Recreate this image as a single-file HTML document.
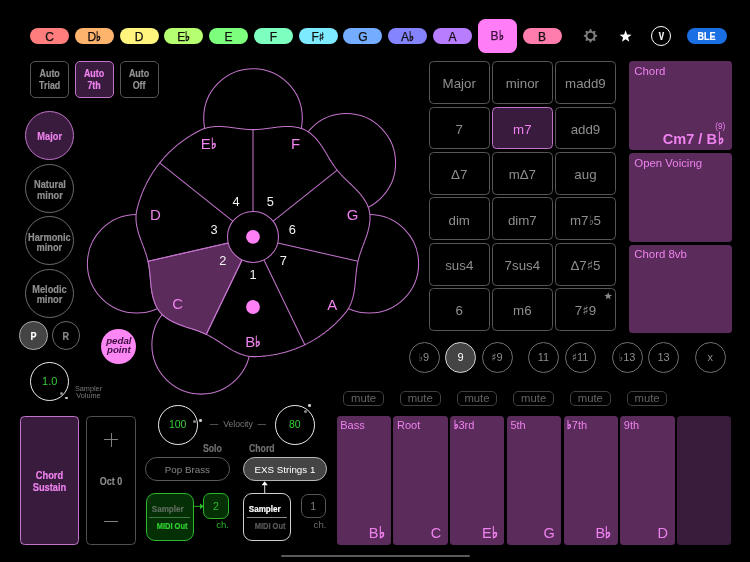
<!DOCTYPE html><html><head><meta charset="utf-8"><title>Chord Pad</title><style>
html,body{margin:0;padding:0;background:#000;}
body{width:750px;height:562px;overflow:hidden;position:relative;font-family:"Liberation Sans","DejaVu Sans",sans-serif;color:#888;}
.a{position:absolute;box-sizing:border-box;}
.c{display:flex;align-items:center;justify-content:center;text-align:center;}
.cb{display:inline-block;font-weight:bold;transform:scaleX(.86);white-space:nowrap;-webkit-text-stroke:.2px;}
.pill{height:16.8px;width:39px;top:27.6px;border-radius:8.4px;color:#141010;font-size:12px;padding-top:1.4px;-webkit-text-stroke:.25px;}
.auto{top:61.1px;width:39.2px;height:36.7px;border:1.1px solid #555;border-radius:5px;font-size:10.6px;line-height:11.8px;color:#939393;padding-top:1.4px;}
.cell{width:60.9px;height:42.8px;border:1.15px solid #565656;border-radius:4.5px;font-size:13.3px;color:#8e8e8e;padding-top:2.6px;}
.scale{left:24.9px;width:49.2px;height:49.2px;border-radius:50%;border:1.1px solid #6c6c6c;font-size:11px;line-height:10.3px;color:#909090;}
.scale .cb,.auto .cb{transform:scaleX(.84);}
.panel{left:628.5px;width:103.7px;height:88.7px;border-radius:3.5px;background:#5b2b5c;color:#ee82ee;font-size:11.4px;}
.ten{top:342px;width:31px;height:31px;border-radius:50%;border:1.15px solid #707070;font-size:11px;color:#8c8c8c;padding-bottom:.8px;}
.ten .fl,.cell .fl{-webkit-text-stroke:0;font-size:1em;}
.mute{top:391.1px;width:40.7px;height:14.7px;border:1.1px solid #404040;border-radius:5px;font-size:11.3px;color:#646464;line-height:12px;padding-bottom:.5px;}
.pad{top:415.6px;width:54.4px;height:129.2px;border-radius:3.5px;background:#5b2b5c;color:#ee82ee;}
.pad .l{position:absolute;left:3.6px;top:3.6px;font-size:11px;}
.pad .n{position:absolute;right:6.5px;bottom:4px;font-size:14.5px;}
.a.sel{border-color:#c274cb;background:#381b3d;color:#ee82ee;}
.sh{font-family:"DejaVu Sans",sans-serif;}
.fl{font-family:"DejaVu Sans",sans-serif;-webkit-text-stroke:.05em currentColor;display:inline-block;font-size:1.1em;line-height:1;vertical-align:0;transform:scaleX(.8);transform-origin:left center;margin-right:-.1em;margin-left:.02em;}
.lab .fl{font-size:1em;-webkit-text-stroke:.04em currentColor;}
.lab{position:absolute;transform:translate(-50%,-50%);white-space:nowrap;line-height:1;}
#w{position:absolute;left:0;top:0;width:750px;height:562px;will-change:transform;}
</style></head><body><div id="w"><div class="a c pill" style="left:30.0px;background:#ff7d7d;">C</div>
<div class="a c pill" style="left:74.8px;background:#ffb46e;"><span>D<span class="fl">♭</span></span></div>
<div class="a c pill" style="left:119.5px;background:#fff47e;">D</div>
<div class="a c pill" style="left:164.3px;background:#b6ff70;"><span>E<span class="fl">♭</span></span></div>
<div class="a c pill" style="left:209.1px;background:#7dff7d;">E</div>
<div class="a c pill" style="left:253.9px;background:#7dffc0;">F</div>
<div class="a c pill" style="left:298.6px;background:#7deaff;"><span>F<span class="sh">♯</span></span></div>
<div class="a c pill" style="left:343.4px;background:#74acff;">G</div>
<div class="a c pill" style="left:388.2px;background:#8484ff;"><span>A<span class="fl">♭</span></span></div>
<div class="a c pill" style="left:432.9px;background:#b87dff;">A</div>
<div class="a c" style="left:477.7px;top:19.2px;width:39px;height:33.6px;border-radius:7.5px;background:#ff7df6;color:#3a103a;font-size:12px;padding-top:0;-webkit-text-stroke:.25px;"><span>B<span class="fl">♭</span></span></div>
<div class="a c pill" style="left:522.5px;background:#ff7dac;">B</div>
<svg class="a" style="left:0;top:0" width="750" height="70" viewBox="0 0 750 70"><path d="M588.91 31.16 L589.97 29.12 L591.03 29.12 L592.09 31.16 L592.66 31.40 L594.85 30.71 L595.59 31.45 L594.90 33.64 L595.14 34.21 L597.18 35.27 L597.18 36.33 L595.14 37.39 L594.90 37.96 L595.59 40.15 L594.85 40.89 L592.66 40.20 L592.09 40.44 L591.03 42.48 L589.97 42.48 L588.91 40.44 L588.34 40.20 L586.15 40.89 L585.41 40.15 L586.10 37.96 L585.86 37.39 L583.82 36.33 L583.82 35.27 L585.86 34.21 L586.10 33.64 L585.41 31.45 L586.15 30.71 L588.34 31.40Z" fill="#7c7c7c"/><circle cx="590.5" cy="35.8" r="3.1" fill="#000"/><path d="M625.60 30.30 L627.13 34.50 L631.59 34.65 L628.07 37.40 L629.30 41.70 L625.60 39.20 L621.90 41.70 L623.13 37.40 L619.61 34.65 L624.07 34.50Z" fill="#fff"/></svg>
<div class="a c" style="left:651px;top:25.8px;width:20.4px;height:20.4px;border-radius:50%;border:1.1px solid #fff;color:#fff;font-size:10.6px;"><span class="cb" style="transform:scaleX(.76)">V</span></div>
<div class="a c" style="left:687.4px;top:27.6px;width:39.2px;height:16.4px;border-radius:8.2px;background:#1b6fe4;color:#fff;font-size:10.5px;"><span class="cb">BLE</span></div>
<div class="a c auto" style="left:30px;"><span class="cb">Auto<br>Triad</span></div>
<div class="a c auto sel" style="left:74.8px;"><span class="cb">Auto<br>7th</span></div>
<div class="a c auto" style="left:119.5px;"><span class="cb">Auto<br>Off</span></div>
<div class="a c scale sel" style="top:111.3px;"><span class="cb">Major</span></div>
<div class="a c scale" style="top:163.7px;padding-top:2.6px;"><span class="cb">Natural<br>minor</span></div>
<div class="a c scale" style="top:216.2px;padding-top:2.6px;"><span class="cb">Harmonic<br>minor</span></div>
<div class="a c scale" style="top:268.6px;padding-top:2.6px;"><span class="cb">Melodic<br>minor</span></div>
<div class="a c" style="left:19.2px;top:321.4px;width:28.4px;height:28.4px;border-radius:50%;border:1px solid #a8a8a8;background:#444;color:#fff;font-size:10.5px;"><span class="cb">P</span></div>
<div class="a c" style="left:52px;top:321.4px;width:28.4px;height:28.4px;border-radius:50%;border:1px solid #6a6a6a;color:#8a8a8a;font-size:10.5px;"><span class="cb">R</span></div>
<div class="a c" style="left:101.4px;top:329.2px;width:34.9px;height:34.9px;border-radius:50%;background:#fd86f5;color:#3a0d3c;font-size:9.7px;line-height:9px;font-weight:bold;font-style:italic;padding-bottom:2.4px;"><span>pedal<br>point</span></div>
<div class="a c" style="left:29.9px;top:361.9px;width:39.6px;height:39.6px;border-radius:50%;border:1.3px solid #ececec;color:#35cc35;font-size:11px;padding-bottom:2px;">1.0</div>
<div class="a" style="left:60px;top:391.8px;width:3px;height:3px;border-radius:50%;background:#888;"></div>
<div class="a" style="left:65px;top:396.8px;width:2.6px;height:2.6px;border-radius:50%;background:#cdcdcd;"></div>
<div class="a" style="left:72px;top:385px;width:33px;font-size:7.3px;line-height:7.2px;color:#7a7a7a;text-align:center;">Sampler<br>Volume</div>
<svg class="a" style="left:0;top:0" width="750" height="562" viewBox="0 0 750 562"><g fill="none" stroke="#c274cb" stroke-width="1.05"><circle cx="253.0" cy="118.0" r="49.3"/><circle cx="346.3" cy="162.9" r="49.3"/><circle cx="369.3" cy="263.8" r="49.3"/><circle cx="201.2" cy="344.8" r="49.3"/><circle cx="136.7" cy="263.8" r="49.3"/><path d="M253.0 129.6 L253.9 129.6 L254.9 129.6 L255.8 129.5 L256.8 129.5 L257.7 129.5 L258.7 129.4 L259.6 129.3 L260.6 129.3 L261.5 129.2 L262.5 129.1 L263.4 129.0 L264.4 128.8 L265.4 128.7 L266.3 128.6 L267.3 128.5 L268.3 128.3 L269.3 128.2 L270.3 128.1 L271.3 127.9 L272.3 127.8 L273.3 127.7 L274.3 127.5 L275.4 127.4 L276.4 127.3 L277.4 127.1 L278.5 127.0 L279.5 126.9 L280.5 126.8 L281.6 126.7 L282.6 126.7 L283.7 126.6 L284.8 126.5 L285.8 126.5 L286.9 126.5 L287.9 126.5 L289.0 126.5 L290.1 126.5 L291.1 126.6 L292.2 126.7 L293.2 126.8 L294.3 126.9 L295.3 127.0 L296.4 127.2 L297.4 127.4 L298.4 127.6 L299.4 127.9 L300.4 128.2 L301.4 128.5 L302.4 128.8 L303.4 129.2 L304.4 129.6 L305.3 130.1 L306.2 130.6 L307.1 131.1 L308.0 131.7 L308.9 132.3 L309.7 132.9 L310.5 133.5 L311.3 134.2 L312.1 134.9 L312.9 135.6 L313.7 136.3 L314.4 137.0 L315.2 137.8 L315.9 138.6 L316.6 139.4 L317.3 140.2 L317.9 141.0 L318.6 141.8 L319.3 142.7 L319.9 143.5 L320.5 144.4 L321.1 145.3 L321.7 146.1 L322.3 147.0 L322.9 147.9 L323.4 148.8 L324.0 149.6 L324.5 150.5 L325.1 151.4 L325.6 152.3 L326.1 153.2 L326.7 154.0 L327.2 154.9 L327.7 155.8 L328.2 156.7 L328.7 157.5 L329.2 158.4 L329.7 159.2 L330.2 160.1 L330.8 160.9 L331.3 161.7 L331.8 162.5 L332.3 163.3 L332.8 164.1 L333.4 164.9 L333.9 165.7 L334.5 166.5 L335.0 167.3 L335.6 168.0 L336.1 168.8 L336.7 169.5 L337.3 170.3 L337.9 171.0 L338.5 171.7 L339.1 172.4 L339.7 173.1 L340.3 173.8 L341.0 174.5 L341.6 175.2 L342.3 175.9 L342.9 176.6 L343.6 177.3 L344.3 178.0 L345.0 178.7 L345.7 179.4 L346.4 180.1 L347.1 180.7 L347.8 181.4 L348.6 182.1 L349.3 182.8 L350.0 183.5 L350.8 184.2 L351.5 184.9 L352.2 185.6 L353.0 186.4 L353.7 187.1 L354.5 187.8 L355.2 188.6 L355.9 189.3 L356.7 190.1 L357.4 190.8 L358.1 191.6 L358.8 192.4 L359.5 193.2 L360.2 194.0 L360.9 194.8 L361.5 195.6 L362.2 196.5 L362.8 197.3 L363.4 198.2 L364.0 199.1 L364.6 200.0 L365.1 200.9 L365.7 201.8 L366.2 202.7 L366.7 203.6 L367.1 204.6 L367.5 205.5 L367.9 206.5 L368.3 207.5 L368.7 208.5 L369.0 209.5 L369.2 210.5 L369.5 211.5 L369.6 212.5 L369.8 213.5 L369.9 214.6 L370.0 215.6 L370.0 216.7 L370.0 217.7 L370.0 218.8 L370.0 219.8 L369.9 220.9 L369.8 221.9 L369.7 223.0 L369.5 224.0 L369.4 225.1 L369.2 226.1 L369.0 227.2 L368.7 228.2 L368.5 229.2 L368.2 230.3 L368.0 231.3 L367.7 232.3 L367.4 233.3 L367.1 234.3 L366.8 235.3 L366.4 236.3 L366.1 237.3 L365.7 238.3 L365.4 239.3 L365.0 240.2 L364.7 241.2 L364.3 242.2 L364.0 243.1 L363.6 244.1 L363.2 245.0 L362.9 245.9 L362.5 246.9 L362.2 247.8 L361.8 248.7 L361.5 249.7 L361.2 250.6 L360.9 251.5 L360.5 252.4 L360.2 253.3 L359.9 254.2 L359.7 255.1 L359.4 256.1 L359.1 257.0 L358.9 257.9 L358.6 258.8 L358.4 259.7 L358.2 260.6 L357.9 261.5 L357.7 262.4 L357.6 263.4 L357.4 264.3 L357.2 265.2 L357.0 266.2 L356.9 267.1 L356.8 268.0 L356.6 269.0 L356.5 269.9 L356.4 270.9 L356.3 271.9 L356.2 272.8 L356.1 273.8 L356.0 274.8 L355.9 275.8 L355.8 276.8 L355.7 277.8 L355.6 278.8 L355.5 279.8 L355.4 280.8 L355.4 281.8 L355.3 282.8 L355.2 283.9 L355.0 284.9 L354.9 285.9 L354.8 287.0 L354.7 288.0 L354.5 289.0 L354.4 290.1 L354.2 291.1 L354.1 292.2 L353.9 293.2 L353.7 294.2 L353.4 295.3 L353.2 296.3 L352.9 297.3 L352.7 298.4 L352.4 299.4 L352.0 300.4 L351.7 301.4 L351.3 302.4 L351.0 303.4 L350.6 304.3 L350.1 305.3 L349.7 306.2 L349.2 307.2 L348.7 308.1 L348.1 309.0 L347.6 309.9 L347.0 310.7 L346.4 311.6 L345.7 312.4 L345.1 313.2 L344.4 314.0 L343.7 314.8 L343.0 315.6 L342.4 316.4 L341.7 317.1 L341.0 317.9 L340.3 318.7 L339.5 319.4 L338.8 320.2 L338.1 320.9 L337.4 321.7 L336.6 322.4 L335.9 323.1 L335.1 323.8 L334.4 324.6 L333.6 325.3 L332.8 326.0 L332.1 326.7 L331.3 327.3 L330.5 328.0 L329.7 328.7 L328.9 329.4 L328.1 330.0 L327.3 330.7 L326.4 331.3 L325.6 331.9 L324.8 332.6 L324.0 333.2 L323.1 333.8 L322.3 334.4 L321.4 335.0 L320.6 335.6 L319.7 336.2 L318.8 336.8 L318.0 337.4 L317.1 337.9 L316.2 338.5 L315.3 339.0 L314.4 339.6 L313.5 340.1 L312.6 340.6 L311.7 341.1 L310.8 341.6 L309.9 342.1 L309.0 342.6 L308.1 343.1 L307.2 343.6 L306.2 344.1 L305.3 344.5 L304.4 345.0 L303.4 345.4 L302.5 345.9 L301.5 346.3 L300.6 346.7 L299.6 347.1 L298.7 347.5 L297.7 347.9 L296.7 348.3 L295.8 348.7 L294.8 349.0 L293.8 349.4 L292.8 349.8 L291.8 350.1 L290.9 350.4 L289.9 350.8 L288.9 351.1 L287.9 351.4 L286.9 351.7 L285.9 352.0 L284.9 352.3 L283.9 352.5 L282.9 352.8 L281.9 353.1 L280.9 353.3 L279.8 353.5 L278.8 353.8 L277.8 354.0 L276.8 354.2 L275.8 354.4 L274.7 354.6 L273.7 354.8 L272.7 355.0 L271.7 355.1 L270.6 355.3 L269.6 355.4 L268.6 355.6 L267.5 355.7 L266.5 355.8 L265.5 355.9 L264.4 356.1 L263.4 356.1 L262.4 356.2 L261.3 356.3 L260.3 356.4 L259.2 356.4 L258.2 356.5 L257.2 356.5 L256.1 356.6 L255.1 356.6 L254.0 356.6 L253.0 356.6 L252.0 356.6 L250.9 356.5 L249.9 356.4 L248.8 356.3 L247.8 356.1 L246.8 355.9 L245.8 355.7 L244.7 355.4 L243.7 355.1 L242.7 354.8 L241.7 354.5 L240.7 354.1 L239.7 353.7 L238.8 353.3 L237.8 352.9 L236.8 352.5 L235.9 352.0 L234.9 351.6 L234.0 351.1 L233.0 350.6 L232.1 350.1 L231.2 349.6 L230.3 349.0 L229.4 348.5 L228.5 347.9 L227.6 347.4 L226.7 346.8 L225.8 346.3 L225.0 345.7 L224.1 345.1 L223.2 344.6 L222.4 344.0 L221.6 343.5 L220.7 342.9 L219.9 342.3 L219.0 341.8 L218.2 341.3 L217.4 340.7 L216.6 340.2 L215.7 339.7 L214.9 339.1 L214.1 338.6 L213.3 338.1 L212.5 337.6 L211.6 337.2 L210.8 336.7 L210.0 336.2 L209.1 335.8 L208.3 335.4 L207.5 334.9 L206.6 334.5 L205.8 334.1 L204.9 333.7 L204.1 333.3 L203.2 332.9 L202.3 332.6 L201.5 332.2 L200.6 331.9 L199.7 331.5 L198.8 331.2 L197.9 330.8 L197.0 330.5 L196.1 330.2 L195.1 329.9 L194.2 329.6 L193.3 329.3 L192.3 329.0 L191.4 328.6 L190.4 328.3 L189.5 328.0 L188.5 327.7 L187.5 327.4 L186.6 327.1 L185.6 326.8 L184.6 326.4 L183.6 326.1 L182.6 325.8 L181.6 325.4 L180.7 325.0 L179.7 324.7 L178.7 324.3 L177.7 323.9 L176.7 323.5 L175.8 323.1 L174.8 322.6 L173.8 322.2 L172.9 321.7 L172.0 321.2 L171.0 320.7 L170.1 320.2 L169.2 319.7 L168.3 319.1 L167.4 318.5 L166.5 317.9 L165.7 317.3 L164.9 316.7 L164.0 316.0 L163.2 315.3 L162.5 314.6 L161.7 313.9 L161.0 313.1 L160.3 312.4 L159.6 311.6 L159.0 310.7 L158.4 309.9 L157.9 309.0 L157.3 308.1 L156.8 307.2 L156.3 306.2 L155.9 305.3 L155.4 304.3 L155.0 303.4 L154.7 302.4 L154.3 301.4 L154.0 300.4 L153.6 299.4 L153.3 298.4 L153.1 297.3 L152.8 296.3 L152.6 295.3 L152.3 294.2 L152.1 293.2 L151.9 292.2 L151.8 291.1 L151.6 290.1 L151.5 289.0 L151.3 288.0 L151.2 287.0 L151.1 285.9 L151.0 284.9 L150.8 283.9 L150.7 282.8 L150.6 281.8 L150.6 280.8 L150.5 279.8 L150.4 278.8 L150.3 277.8 L150.2 276.8 L150.1 275.8 L150.0 274.8 L149.9 273.8 L149.8 272.8 L149.7 271.9 L149.6 270.9 L149.5 269.9 L149.4 269.0 L149.2 268.0 L149.1 267.1 L149.0 266.2 L148.8 265.2 L148.6 264.3 L148.4 263.4 L148.3 262.4 L148.1 261.5 L147.8 260.6 L147.6 259.7 L147.4 258.8 L147.1 257.9 L146.9 257.0 L146.6 256.1 L146.3 255.1 L146.1 254.2 L145.8 253.3 L145.5 252.4 L145.1 251.5 L144.8 250.6 L144.5 249.7 L144.2 248.7 L143.8 247.8 L143.5 246.9 L143.1 245.9 L142.8 245.0 L142.4 244.1 L142.0 243.1 L141.7 242.2 L141.3 241.2 L141.0 240.2 L140.6 239.3 L140.3 238.3 L139.9 237.3 L139.6 236.3 L139.2 235.3 L138.9 234.3 L138.6 233.3 L138.3 232.3 L138.0 231.3 L137.8 230.3 L137.5 229.2 L137.3 228.2 L137.0 227.2 L136.8 226.1 L136.6 225.1 L136.5 224.0 L136.3 223.0 L136.2 221.9 L136.1 220.9 L136.0 219.8 L136.0 218.8 L136.0 217.7 L136.0 216.7 L136.0 215.6 L136.1 214.6 L136.2 213.5 L136.4 212.5 L136.5 211.5 L136.8 210.5 L137.0 209.4 L137.2 208.4 L137.5 207.4 L137.8 206.4 L138.0 205.4 L138.3 204.4 L138.6 203.4 L138.9 202.4 L139.2 201.4 L139.5 200.4 L139.9 199.4 L140.2 198.5 L140.5 197.5 L140.9 196.5 L141.3 195.5 L141.6 194.5 L142.0 193.6 L142.4 192.6 L142.8 191.6 L143.2 190.7 L143.6 189.7 L144.0 188.8 L144.4 187.8 L144.9 186.9 L145.3 185.9 L145.8 185.0 L146.2 184.1 L146.7 183.1 L147.2 182.2 L147.7 181.3 L148.2 180.4 L148.7 179.5 L149.2 178.6 L149.7 177.7 L150.2 176.8 L150.7 175.9 L151.3 175.0 L151.8 174.1 L152.4 173.2 L152.9 172.3 L153.5 171.5 L154.1 170.6 L154.7 169.7 L155.3 168.9 L155.9 168.0 L156.5 167.2 L157.1 166.3 L157.7 165.5 L158.4 164.7 L159.0 163.9 L159.6 163.0 L160.3 162.2 L160.9 161.4 L161.6 160.6 L162.3 159.8 L163.0 159.0 L163.6 158.2 L164.3 157.5 L165.0 156.7 L165.7 155.9 L166.5 155.2 L167.2 154.4 L167.9 153.7 L168.6 152.9 L169.4 152.2 L170.1 151.5 L170.9 150.8 L171.6 150.0 L172.4 149.3 L173.2 148.6 L173.9 147.9 L174.7 147.3 L175.5 146.6 L176.3 145.9 L177.1 145.2 L177.9 144.6 L178.7 143.9 L179.6 143.3 L180.4 142.7 L181.2 142.0 L182.0 141.4 L182.9 140.8 L183.7 140.2 L184.6 139.6 L185.4 139.0 L186.3 138.4 L187.2 137.8 L188.0 137.2 L188.9 136.7 L189.8 136.1 L190.7 135.6 L191.6 135.0 L192.5 134.5 L193.3 134.0 L194.3 133.5 L195.2 133.0 L196.1 132.5 L197.0 132.0 L197.9 131.5 L198.8 131.0 L199.8 130.5 L200.7 130.1 L201.6 129.6 L202.6 129.2 L203.6 128.8 L204.6 128.5 L205.6 128.2 L206.6 127.9 L207.6 127.6 L208.6 127.4 L209.6 127.2 L210.7 127.0 L211.7 126.9 L212.8 126.8 L213.8 126.7 L214.9 126.6 L215.9 126.5 L217.0 126.5 L218.1 126.5 L219.1 126.5 L220.2 126.5 L221.2 126.5 L222.3 126.6 L223.4 126.7 L224.4 126.7 L225.5 126.8 L226.5 126.9 L227.5 127.0 L228.6 127.1 L229.6 127.3 L230.6 127.4 L231.7 127.5 L232.7 127.7 L233.7 127.8 L234.7 127.9 L235.7 128.1 L236.7 128.2 L237.7 128.3 L238.7 128.5 L239.7 128.6 L240.6 128.7 L241.6 128.8 L242.6 129.0 L243.5 129.1 L244.5 129.2 L245.4 129.3 L246.4 129.3 L247.3 129.4 L248.3 129.5 L249.2 129.5 L250.2 129.5 L251.1 129.6 L252.1 129.6Z" fill="#000"/><path d="M241.9 260.3 L206.3 334.3 L204.8 333.7 L203.3 333.0 L201.8 332.4 L200.3 331.8 L198.8 331.2 L197.2 330.6 L195.7 330.1 L194.1 329.5 L192.5 329.0 L190.8 328.5 L189.2 327.9 L187.5 327.4 L185.9 326.9 L184.2 326.3 L182.5 325.7 L180.8 325.1 L179.1 324.5 L177.4 323.8 L175.8 323.1 L174.1 322.3 L172.5 321.5 L170.9 320.6 L169.3 319.7 L167.8 318.8 L166.3 317.8 L164.9 316.7 L163.5 315.5 L162.1 314.3 L160.9 313.0 L159.7 311.7 L158.7 310.2 L157.7 308.7 L156.8 307.2 L156.0 305.6 L155.3 303.9 L154.6 302.3 L154.0 300.5 L153.5 298.8 L153.0 297.1 L152.6 295.3 L152.2 293.5 L151.9 291.7 L151.6 289.9 L151.3 288.1 L151.1 286.4 L150.9 284.6 L150.7 282.8 L150.6 281.1 L150.4 279.3 L150.3 277.6 L150.1 275.9 L150.0 274.2 L149.8 272.5 L149.6 270.9 L149.4 269.3 L149.2 267.6 L148.9 266.0 L148.7 264.4 L148.3 262.8 L148.0 261.3 L228.1 243.0Z" fill="#5b2b5c"/><line x1="253.0" y1="211.8" x2="253.0" y2="129.6"/><line x1="272.9" y1="221.4" x2="337.2" y2="170.2"/><line x1="277.9" y1="243.0" x2="358.0" y2="261.3"/><line x1="264.1" y1="260.3" x2="304.8" y2="344.8"/><line x1="241.9" y1="260.3" x2="206.3" y2="334.3"/><line x1="228.1" y1="243.0" x2="148.0" y2="261.3"/><line x1="233.1" y1="221.4" x2="159.7" y2="162.9"/><circle cx="253.0" cy="236.9" r="25.5" fill="#000"/></g><circle cx="253.0" cy="236.8" r="6.9" fill="#ff80f6"/><circle cx="253.0" cy="307" r="6.9" fill="#ff80f6"/></svg>
<div class="lab" style="left:253px;top:274.6px;font-size:12.8px;color:#f2f2f2;">1</div><div class="lab" style="left:222.9px;top:261.1px;font-size:12.8px;color:#f2f2f2;">2</div><div class="lab" style="left:214.1px;top:230.3px;font-size:12.8px;color:#f2f2f2;">3</div><div class="lab" style="left:236px;top:202.3px;font-size:12.8px;color:#f2f2f2;">4</div><div class="lab" style="left:270.2px;top:202.3px;font-size:12.8px;color:#f2f2f2;">5</div><div class="lab" style="left:292.2px;top:230.3px;font-size:12.8px;color:#f2f2f2;">6</div><div class="lab" style="left:283.3px;top:261.1px;font-size:12.8px;color:#f2f2f2;">7</div><div class="lab" style="left:253.1px;top:342.0px;font-size:15px;color:#ee82ee;"><span>B<span class="fl">♭</span></span></div><div class="lab" style="left:177.7px;top:303.3px;font-size:15px;color:#ee82ee;">C</div><div class="lab" style="left:155.4px;top:214.4px;font-size:15px;color:#ee82ee;">D</div><div class="lab" style="left:208.8px;top:143.60000000000002px;font-size:15px;color:#ee82ee;"><span>E<span class="fl">♭</span></span></div><div class="lab" style="left:295.7px;top:142.5px;font-size:15px;color:#ee82ee;">F</div><div class="lab" style="left:352.7px;top:214.4px;font-size:15px;color:#ee82ee;">G</div><div class="lab" style="left:332.3px;top:303.5px;font-size:15px;color:#ee82ee;">A</div>
<div class="a c cell" style="left:428.8px;top:61.2px;">Major</div>
<div class="a c cell" style="left:491.9px;top:61.2px;">minor</div>
<div class="a c cell" style="left:555.0px;top:61.2px;">madd9</div>
<div class="a c cell" style="left:428.8px;top:106.6px;">7</div>
<div class="a c cell sel" style="left:491.9px;top:106.6px;">m7</div>
<div class="a c cell" style="left:555.0px;top:106.6px;">add9</div>
<div class="a c cell" style="left:428.8px;top:152.0px;">Δ7</div>
<div class="a c cell" style="left:491.9px;top:152.0px;">mΔ7</div>
<div class="a c cell" style="left:555.0px;top:152.0px;">aug</div>
<div class="a c cell" style="left:428.8px;top:197.4px;">dim</div>
<div class="a c cell" style="left:491.9px;top:197.4px;">dim7</div>
<div class="a c cell" style="left:555.0px;top:197.4px;"><span>m7<span class="fl">♭</span>5</span></div>
<div class="a c cell" style="left:428.8px;top:242.8px;">sus4</div>
<div class="a c cell" style="left:491.9px;top:242.8px;">7sus4</div>
<div class="a c cell" style="left:555.0px;top:242.8px;"><span>Δ7<span class="sh">♯</span>5</span></div>
<div class="a c cell" style="left:428.8px;top:288.2px;">6</div>
<div class="a c cell" style="left:491.9px;top:288.2px;">m6</div>
<div class="a c cell" style="left:555.0px;top:288.2px;"><span>7<span class="sh">♯</span>9</span></div>
<svg class="a" style="left:0;top:0" width="750" height="562"><path d="M608.20 292.10 L609.17 294.87 L612.10 294.93 L609.77 296.71 L610.61 299.52 L608.20 297.85 L605.79 299.52 L606.63 296.71 L604.30 294.93 L607.23 294.87Z" fill="#8a8a8a"/></svg>
<div class="a panel" style="top:61.2px;"><span class="a" style="left:5.8px;top:4.1px;">Chord</span><span class="a" style="right:7.6px;bottom:2.9px;font-size:14.6px;font-weight:bold;white-space:nowrap;">Cm7 / B<span class="fl" style="font-size:1.15em;margin-left:.08em;font-weight:normal">♭</span></span><span class="a" style="right:7px;top:61.1px;font-size:8.2px;">(9)</span></div>
<div class="a panel" style="top:152.9px;"><span class="a" style="left:5.8px;top:3.7px;">Open Voicing</span></div>
<div class="a panel" style="top:244.6px;"><span class="a" style="left:5.8px;top:3.4px;">Chord 8vb</span></div>
<div class="a c ten" style="left:408.5px;"><span><span class="fl">♭</span>9</span></div>
<div class="a c ten" style="left:445.0px;background:#444;border:1.3px solid #d4d4d4;color:#fff;">9</div>
<div class="a c ten" style="left:481.5px;"><span><span class="sh">♯</span>9</span></div>
<div class="a c ten" style="left:527.9px;">11</div>
<div class="a c ten" style="left:564.5px;"><span><span class="sh">♯</span>11</span></div>
<div class="a c ten" style="left:611.7px;"><span><span class="fl">♭</span>13</span></div>
<div class="a c ten" style="left:648.1px;">13</div>
<div class="a c ten" style="left:694.8px;">x</div>
<div class="a c mute" style="left:343.2px;">mute</div>
<div class="a pad" style="left:336.7px;"><span class="l">Bass</span><span class="n"><span>B<span class="fl">♭</span></span></span></div>
<div class="a c mute" style="left:399.9px;">mute</div>
<div class="a pad" style="left:393.4px;"><span class="l">Root</span><span class="n">C</span></div>
<div class="a c mute" style="left:456.6px;">mute</div>
<div class="a pad" style="left:450.1px;"><span class="l"><span><span class="fl">♭</span>3rd</span></span><span class="n"><span>E<span class="fl">♭</span></span></span></div>
<div class="a c mute" style="left:513.3px;">mute</div>
<div class="a pad" style="left:506.8px;"><span class="l">5th</span><span class="n">G</span></div>
<div class="a c mute" style="left:570.0px;">mute</div>
<div class="a pad" style="left:563.5px;"><span class="l"><span><span class="fl">♭</span>7th</span></span><span class="n"><span>B<span class="fl">♭</span></span></span></div>
<div class="a c mute" style="left:626.7px;">mute</div>
<div class="a pad" style="left:620.2px;"><span class="l">9th</span><span class="n">D</span></div>
<div class="a pad" style="left:676.9px;background:#391b3b;"><span class="l"></span><span class="n"></span></div>
<div class="a c" style="left:20.2px;top:415.6px;width:58.8px;height:129.6px;border-radius:4.5px;border:1px solid #c274cb;background:#381b3d;color:#ee82ee;font-size:10.8px;line-height:12.1px;padding-top:1.2px;"><span class="cb">Chord<br>Sustain</span></div>
<div class="a" style="left:86.4px;top:415.6px;width:49.8px;height:129.6px;border-radius:4.5px;border:1px solid #505050;"></div>
<div class="a" style="left:104.2px;top:438.9px;width:14px;height:1.2px;background:#808080;"></div>
<div class="a" style="left:110.6px;top:432.5px;width:1.2px;height:14px;background:#808080;"></div>
<div class="a" style="left:104.2px;top:520.8px;width:14px;height:1.2px;background:#808080;"></div>
<div class="a c" style="left:86.4px;top:474px;width:49.8px;height:14px;font-size:10.4px;color:#8c8c8c;"><span class="cb">Oct 0</span></div>
<div class="a c" style="left:157.8px;top:404.8px;width:39.8px;height:39.8px;border-radius:50%;border:1.3px solid #ececec;color:#35cc35;font-size:10.5px;padding-bottom:1.6px;">100</div>
<div class="a" style="left:193.2px;top:419.8px;width:3px;height:3px;border-radius:50%;background:#888;"></div>
<div class="a" style="left:199.4px;top:419.2px;width:2.6px;height:2.6px;border-radius:50%;background:#cdcdcd;"></div>
<div class="a c" style="left:274.9px;top:404.8px;width:39.8px;height:39.8px;border-radius:50%;border:1.3px solid #ececec;color:#35cc35;font-size:10.5px;padding-bottom:1.6px;">80</div>
<div class="a" style="left:303.8px;top:409.6px;width:3px;height:3px;border-radius:50%;background:#888;"></div>
<div class="a" style="left:308px;top:404.2px;width:2.6px;height:2.6px;border-radius:50%;background:#cdcdcd;"></div>
<div class="a c" style="left:205px;top:418px;width:66px;height:12px;font-size:8.6px;color:#7a7a7a;white-space:nowrap;">—&nbsp;&nbsp;Velocity&nbsp;&nbsp;—</div>
<div class="a" style="left:177.4px;top:442px;width:44px;height:13px;line-height:13px;font-size:11px;color:#727272;text-align:right;"><span class="cb" style="transform:scaleX(.79);transform-origin:right center;">Solo</span></div>
<div class="a" style="left:249.2px;top:442px;width:44px;height:13px;line-height:13px;font-size:11px;color:#727272;text-align:left;"><span class="cb" style="transform:scaleX(.79);transform-origin:left center;">Chord</span></div>
<div class="a c" style="left:144.9px;top:457.4px;width:85px;height:23.8px;border-radius:11.9px;border:1px solid #5a5a5a;color:#858585;font-size:9.8px;">Pop Brass</div>
<div class="a c" style="left:242.6px;top:457.4px;width:84.6px;height:23.8px;border-radius:11.9px;border:1.1px solid #b8b8b8;background:#444;color:#fff;font-size:9.8px;">EXS Strings 1</div>
<div class="a" style="left:146px;top:493.2px;width:48.2px;height:47.6px;border-radius:9px;border:1.2px solid #2bb82b;background:#053005;"></div>
<div class="a c" style="left:145.7px;top:502.5px;width:44px;height:12px;font-size:9.5px;color:#5f6c5f;"><span class="cb" style="transform:scaleX(.85)">Sampler</span></div>
<div class="a" style="left:149.3px;top:517px;width:41.2px;height:1px;background:#3a7a3a;"></div>
<div class="a c" style="left:150.5px;top:520.3px;width:44px;height:12px;font-size:8.8px;color:#30d030;"><span class="cb" style="transform:scaleX(.85)">MIDI Out</span></div>
<svg class="a" style="left:0;top:0" width="750" height="562"><path d="M194.2 506.3 H200.5" stroke="#2bb82b" stroke-width="1" fill="none"/><path d="M200 503.6 L203.8 506.3 L200 509.2Z" fill="#2bb82b"/><path d="M264.7 493.4 V484.6" stroke="#ddd" stroke-width="1" fill="none"/><path d="M261.6 485.2 L264.7 481.2 L267.8 485.2Z" fill="#fff"/></svg>
<div class="a c" style="left:203.3px;top:493.3px;width:25.4px;height:25.3px;border-radius:7px;border:1.2px solid #2bb82b;background:#053005;color:#2bb82b;font-size:10.6px;">2</div>
<div class="a" style="left:216.2px;top:518.6px;font-size:9.6px;color:#2bb82b;">ch.</div>
<div class="a" style="left:243.2px;top:493.2px;width:47.8px;height:47.6px;border-radius:9px;border:1.2px solid #d0d0d0;"></div>
<div class="a c" style="left:243px;top:502.5px;width:44px;height:12px;font-size:9.5px;color:#fff;"><span class="cb" style="transform:scaleX(.85)">Sampler</span></div>
<div class="a" style="left:246.7px;top:517.2px;width:40.6px;height:1px;background:#8a8a8a;"></div>
<div class="a c" style="left:247.8px;top:520.3px;width:44px;height:12px;font-size:8.8px;color:#5a5a5a;"><span class="cb" style="transform:scaleX(.85)">MIDI Out</span></div>
<div class="a c" style="left:300.7px;top:493.7px;width:25px;height:24.6px;border-radius:7px;border:1.2px solid #555;color:#7c7c7c;font-size:10.6px;">1</div>
<div class="a" style="left:313.6px;top:518.6px;font-size:9.6px;color:#6a6a6a;">ch.</div>
<div class="a" style="left:280.8px;top:554.8px;width:188.8px;height:2.6px;border-radius:1.3px;background:#5a5a5a;"></div></div></body></html>
